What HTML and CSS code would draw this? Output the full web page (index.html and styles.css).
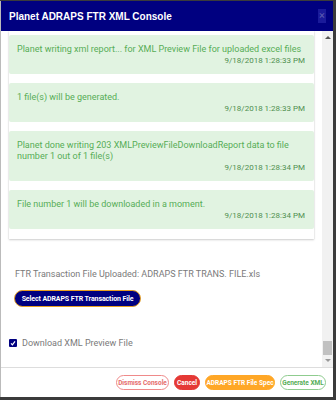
FILE: index.html
```html
<!DOCTYPE html>
<html>
<head>
<meta charset="utf-8">
<link rel="stylesheet" href="styles.css">
</head>
<body>
<div class="dialog">
  <div class="header">
    <span class="title">Planet ADRAPS FTR XML Console</span>
    <span class="close">×</span>
  </div>
  <div class="body">
    <div class="content">
      <div class="card">
        <div class="msg"><div class="text">Planet writing xml report... for XML Preview File for uploaded excel files</div><div class="time">9/18/2018 1:28:33 PM</div></div>
        <div class="msg"><div class="text">1 file(s) will be generated.</div><div class="time">9/18/2018 1:28:33 PM</div></div>
        <div class="msg"><div class="text">Planet done writing 203 XMLPreviewFileDownloadReport data to file number 1 out of 1 file(s)</div><div class="time">9/18/2018 1:28:34 PM</div></div>
        <div class="msg"><div class="text">File number 1 will be downloaded in a moment.</div><div class="time">9/18/2018 1:28:34 PM</div></div>
      </div>
      <p class="uploaded">FTR Transaction File Uploaded: ADRAPS FTR TRANS. FILE.xls</p>
      <button class="select">Select ADRAPS FTR Transaction File</button>
      <label class="check">
        <span class="box"><svg width="6" height="6" viewBox="0 0 6 6"><path d="M1 3.4 L2.4 4.8 L5 1.4" fill="none" stroke="#fff" stroke-width="1.2"/></svg></span>
        <span>Download XML Preview File</span>
      </label>
    </div>
    <div class="scrollbar">
      <span class="arrow up"></span>
      <span class="track"><span class="thumb"></span></span>
      <span class="arrow down"></span>
    </div>
  </div>
  <div class="footer">
    <button class="btn dismiss">Dismiss Console</button>
    <button class="btn cancel">Cancel</button>
    <button class="btn spec">ADRAPS FTR File Spec</button>
    <button class="btn generate">Generate XML</button>
  </div>
</div>
</body>
</html>
```
FILE: styles.css
```css
html, body {
  margin: 0;
  padding: 0;
}
body {
  background: #3b3b3b;
  width: 336px;
  height: 400px;
  overflow: hidden;
  font-family: Roboto, "Liberation Sans", sans-serif;
}
.dialog {
  width: 332px;
  height: 396px;
  margin-top: 1px;
  background: #fff;
  border-left: 1px solid #bbb;
  display: flex;
  flex-direction: column;
}
.header {
  height: 30px;
  background: #000080;
  display: flex;
  align-items: center;
  justify-content: space-between;
  padding: 0 7px 0 8px;
}
.title {
  color: #fff;
  font-family: "Liberation Sans", Arial, sans-serif;
  font-weight: bold;
  font-size: 10px;
}
.close {
  color: #5a5ab0;
  background: #1a1a9a;
  font-size: 11px;
  line-height: 14px;
  width: 8px;
  text-align: center;
}
.body {
  flex: 1;
  display: flex;
  overflow: hidden;
}
.content {
  flex: 1;
  padding: 0 8px 0 8px;
  overflow: hidden;
}
.card {
  background: #fff;
  box-shadow: 0 1px 2px rgba(0,0,0,0.18), 0 0 1px rgba(0,0,0,0.15);
  padding: 4px 0 10px;
}
.msg {
  background: #e1f3e1;
  border-radius: 2px;
  padding: 9px 9px 8px 8px;
  margin-bottom: 9px;
}
.msg:last-child {
  margin-bottom: 0;
}
.text {
  color: #56ad56;
  font-size: 9px;
  line-height: 11px;
}
.time {
  color: #4f8f4f;
  font-size: 8px;
  line-height: 11px;
  text-align: right;
}
.uploaded {
  margin: 30px 0 0 6px;
  color: #7a7a7a;
  font-size: 9px;
  line-height: 11px;
}
.select {
  margin: 10px 0 0 5px;
  height: 17px;
  width: 127px;
  padding: 0;
  border: 1.5px solid #e8a020;
  border-radius: 9px;
  background: #000080;
  color: #fff;
  font-family: Roboto, sans-serif;
  font-weight: bold;
  font-size: 7px;
  letter-spacing: -0.1px;
  white-space: nowrap;
}
.check {
  display: flex;
  align-items: center;
  margin: 31px 0 0 0;
  color: #7a7a7a;
  font-size: 9px;
}
.check .box {
  width: 8px;
  height: 8px;
  background: #000080;
  border-radius: 1px;
  margin-right: 5px;
  display: flex;
  align-items: center;
  justify-content: center;
}
.scrollbar {
  width: 11px;
  background: #f1f1f1;
  display: flex;
  flex-direction: column;
  align-items: center;
}
.arrow {
  width: 0;
  height: 0;
  border-left: 3px solid transparent;
  border-right: 3px solid transparent;
  margin: 5px 0;
}
.arrow.up {
  border-bottom: 3px solid #555;
}
.arrow.down {
  border-top: 3px solid #999;
  margin: 4px 0 5px;
}
.track {
  flex: 1;
  width: 100%;
  display: flex;
  flex-direction: column;
  justify-content: flex-end;
  align-items: center;
}
.thumb {
  width: 9px;
  height: 14px;
  background: #c1c1c1;
}
.footer {
  height: 29px;
  border-top: 1px solid #ddd;
  display: flex;
  align-items: center;
  justify-content: flex-end;
  gap: 5px;
  padding-right: 7px;
}
.btn {
  height: 15px;
  border-radius: 8px;
  font-family: Roboto, sans-serif;
  font-weight: bold;
  font-size: 6.5px;
  padding: 0;
  border: 1px solid transparent;
  color: #fff;
  white-space: nowrap;
}
.dismiss {
  width: 53px;
  background: #fff;
  border-color: #ef8a8a;
  color: #e56b6b;
}
.cancel {
  width: 26px;
  background: #e53935;
  border-color: #e53935;
}
.spec {
  width: 70px;
  background: #ffa726;
  border-color: #ffa726;
}
.generate {
  width: 46px;
  background: #fff;
  border-color: #8fcc8f;
  color: #56ad56;
}
```
